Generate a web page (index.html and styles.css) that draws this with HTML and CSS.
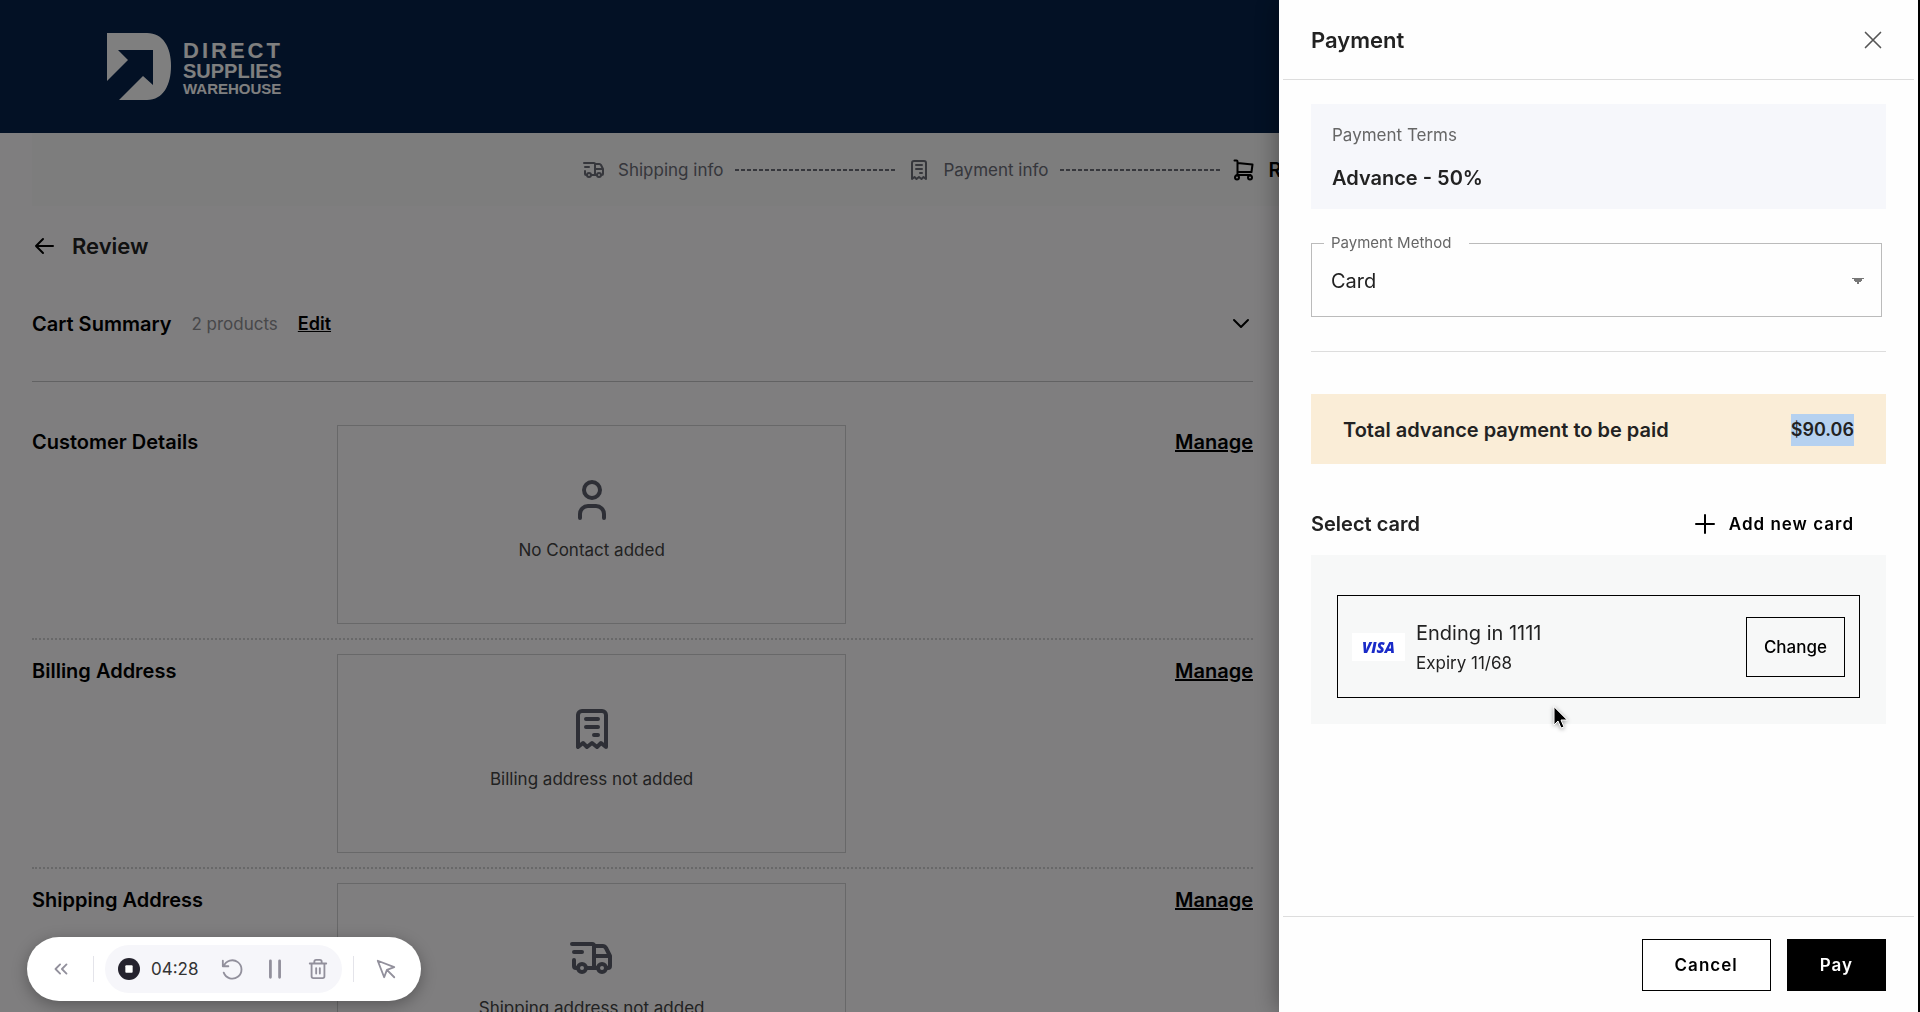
FILE: index.html
```
<!DOCTYPE html>
<html lang="en">
<head>
  <meta charset="UTF-8">
  <title>Review - Direct Supplies Warehouse</title>
  <link rel="stylesheet" href="styles.css">
</head>
<body>
  <!-- shared icons -->
  <svg class="sprite" width="0" height="0" aria-hidden="true">
    <symbol id="icon-user" viewBox="0 0 48 48">
      <circle cx="24" cy="14" r="8"/>
      <path d="M12 42v-4a8 8 0 0 1 8-8h8a8 8 0 0 1 8 8v4"/>
    </symbol>
    <symbol id="icon-receipt" viewBox="0 0 48 48">
      <path d="M10 42V10a4 4 0 0 1 4-4h20a4 4 0 0 1 4 4v32l-5-4-4 4-5-4-5 4-4-4z"/>
      <path d="M18 14h12M18 22h12M26 30h4"/>
    </symbol>
    <symbol id="icon-truck" viewBox="0 0 48 48">
      <path d="M4 10h20a2 2 0 0 1 2 2v22M26 12h8a4 4 0 0 1 4 2l4 8v10a2 2 0 0 1-2 2h-1M26 22h16M6 18h8M6 26v6a2 2 0 0 0 2 2h1M18 34h12"/>
      <circle cx="14" cy="34" r="4"/>
      <circle cx="34" cy="34" r="4"/>
    </symbol>
    <symbol id="icon-cart" viewBox="0 0 48 48">
      <path d="M5 5h4a2 2 0 0 1 2 2v27M11 10l30 3-2 15H11M9 34h28"/>
      <circle cx="10" cy="39" r="4"/>
      <circle cx="36" cy="39" r="4"/>
    </symbol>
  </svg>

  <div class="page">
    <header class="navbar">
      <a class="logo" href="#">
        <svg class="logo-mark" viewBox="0 0 64 67" aria-hidden="true">
          <path fill="#fff" d="M0 0h40c16 0 24 14 24 33S56 67 40 67H12l24-24 10 9V17H11l10 10L0 48z"/>
        </svg>
        <span class="logo-text">
          <span class="logo-direct">DIRECT</span>
          <span class="logo-supplies">SUPPLIES</span>
          <span class="logo-warehouse">WAREHOUSE</span>
        </span>
      </a>
    </header>

    <ol class="steps">
      <li class="step"><svg class="icon"><use href="#icon-truck"/></svg>Shipping info</li>
      <li class="step-line"></li>
      <li class="step"><svg class="icon"><use href="#icon-receipt"/></svg>Payment info</li>
      <li class="step-line"></li>
      <li class="step step-active"><svg class="icon"><use href="#icon-cart"/></svg>Review</li>
    </ol>

    <main class="checkout">
      <div class="title-row">
        <button class="icon-btn" aria-label="Back">
          <svg class="icon" viewBox="0 0 24 24"><path d="M21 12H4M11 5l-7 7 7 7"/></svg>
        </button>
        <h1>Review</h1>
      </div>

      <section class="cart-summary">
        <h2>Cart Summary</h2>
        <span class="cart-count">2 products</span>
        <a class="edit" href="#">Edit</a>
        <button class="icon-btn toggle" aria-label="Show products">
          <svg class="icon" viewBox="0 0 24 24"><path d="M5 8l7 7 7-7"/></svg>
        </button>
      </section>

      <section class="entry">
        <h2>Customer Details</h2>
        <div class="empty-box">
          <svg class="icon-lg"><use href="#icon-user"/></svg>
          <p>No Contact added</p>
        </div>
        <a class="manage" href="#">Manage</a>
      </section>
      <section class="entry">
        <h2>Billing Address</h2>
        <div class="empty-box">
          <svg class="icon-lg"><use href="#icon-receipt"/></svg>
          <p>Billing address not added</p>
        </div>
        <a class="manage" href="#">Manage</a>
      </section>
      <section class="entry">
        <h2>Shipping Address</h2>
        <div class="empty-box">
          <svg class="icon-lg"><use href="#icon-truck"/></svg>
          <p>Shipping address not added</p>
        </div>
        <a class="manage" href="#">Manage</a>
      </section>
    </main>
  </div>

  <div class="overlay"></div>

  <aside class="drawer" role="dialog" aria-labelledby="drawer-title">
    <header class="drawer-header">
      <h2 id="drawer-title">Payment</h2>
      <button class="icon-btn close" aria-label="Close">
        <svg class="icon" viewBox="0 0 24 24"><path d="M3 3l18 18M21 3L3 21"/></svg>
      </button>
    </header>

    <div class="drawer-body">
      <div class="terms">
        <p class="terms-label">Payment Terms</p>
        <p class="terms-value">Advance - 50%</p>
      </div>

      <fieldset class="method">
        <legend><label for="method">Payment Method</label></legend>
        <select id="method">
          <option>Card</option>
        </select>
      </fieldset>

      <div class="total">
        <span>Total advance payment to be paid</span>
        <span class="amount">$90.06</span>
      </div>

      <div class="card-head">
        <h3>Select card</h3>
        <button class="add-card">
          <svg class="icon" viewBox="0 0 24 24"><path d="M12 3v18M3 12h18"/></svg>
          Add new card
        </button>
      </div>

      <div class="card-panel">
        <div class="card">
          <span class="visa">VISA</span>
          <div class="card-info">
            <p class="card-number">Ending in 1111</p>
            <p class="card-expiry">Expiry 11/68</p>
          </div>
          <button class="btn-change">Change</button>
        </div>
      </div>
    </div>

    <footer class="drawer-footer">
      <button class="btn">Cancel</button>
      <button class="btn btn-dark">Pay</button>
    </footer>
  </aside>

  <!-- screen recorder -->
  <div class="recorder">
    <button class="rec-btn rec-collapse" aria-label="Collapse">
      <svg class="rec-icon" viewBox="0 0 24 24"><path d="M11 7l-5 5 5 5M18 7l-5 5 5 5"/></svg>
    </button>
    <span class="rec-sep"></span>
    <div class="rec-group">
      <button class="rec-btn" aria-label="Stop">
        <svg class="rec-icon" viewBox="0 0 24 24"><circle cx="12" cy="12" r="12" fill="#25232e" stroke="none"/><rect x="8" y="8" width="8" height="8" rx="1" fill="#fff" stroke="none"/></svg>
      </button>
      <span class="rec-time">04:28</span>
      <button class="rec-btn" aria-label="Restart">
        <svg class="rec-icon" viewBox="0 0 24 24"><path d="M2 3v6h6M3 9a10 10 0 1 1 0 7"/></svg>
      </button>
      <button class="rec-btn" aria-label="Pause">
        <svg class="rec-icon" viewBox="0 0 24 24"><path stroke-width="3" d="M7 3v18M17 3v18"/></svg>
      </button>
      <button class="rec-btn" aria-label="Delete">
        <svg class="rec-icon" viewBox="0 0 24 24"><path d="M3 6h18M8 6V4a2 2 0 0 1 2-2h4a2 2 0 0 1 2 2v2M5 6v14a2 2 0 0 0 2 2h10a2 2 0 0 0 2-2V6M10 11v6M14 11v6"/></svg>
      </button>
    </div>
    <span class="rec-sep"></span>
    <button class="rec-btn" aria-label="Pointer">
      <svg class="rec-icon" viewBox="0 0 24 24"><path d="M3 3l7 18 3-8 8-3zM13 13l8 8"/></svg>
    </button>
  </div>

  <svg class="cursor" viewBox="0 0 16 24" aria-hidden="true">
    <path d="M1 1v18l4-4 3 7 3-1-3-7h6z" fill="#000" stroke="#fff" stroke-width="1"/>
  </svg>
</body>
</html>
```
FILE: styles.css
```
* { box-sizing: border-box; }
body {
  margin: 0;
  font-family: Inter, "Liberation Sans", sans-serif;
  font-size: 17px;
  line-height: 24px;
  color: #222;
  overflow: hidden;
}
h1, h2, h3, p, ol, fieldset { margin: 0; padding: 0; }
h1, h2, h3 { font-weight: 600; }
h1 { font-size: 22px; line-height: 34px; }
h2, h3 { font-size: 20px; }
a { color: inherit; }
button { font-family: inherit; font-size: 17px; color: #000; cursor: pointer; }

.sprite { position: absolute; }
svg { fill: none; stroke: currentColor; stroke-width: 2; stroke-linecap: round; stroke-linejoin: round; flex: none; }
symbol { stroke-width: 4; }
.icon { display: block; width: 24px; height: 24px; }
.icon-lg { width: 48px; height: 48px; }
.icon-btn { padding: 0; border: 0; background: none; }

/* page */
.page { height: 100vh; overflow: hidden; background: #fefdff; }
.navbar { display: flex; align-items: center; height: 133px; padding: 0 107px; background: #06224a; }
.logo { display: flex; align-items: center; gap: 12px; color: #fff; text-decoration: none; }
.logo-mark { width: 64px; height: 67px; stroke: none; }
.logo-text { display: flex; flex-direction: column; padding-top: 4px; font-family: "Liberation Sans", sans-serif; font-weight: 700; }
.logo-direct { font-size: 22px; line-height: 20px; letter-spacing: 3px; }
.logo-supplies { font-size: 20px; line-height: 20px; }
.logo-warehouse { font-size: 15px; line-height: 16px; }

.steps {
  display: flex;
  align-items: center;
  justify-content: center;
  gap: 12px;
  height: 73px;
  margin: 0 32px;
  background: #fafafb;
  list-style: none;
}
.step { display: flex; align-items: center; gap: 12px; color: #6c6e78; }
.step-active { color: #000; font-size: 20px; font-weight: 600; }
.step-line { width: 160px; height: 2px; background: repeating-linear-gradient(to right, #6c6e78 0 4px, transparent 4px 6px); }

.checkout { padding: 0 667px 0 32px; }
.title-row { display: flex; align-items: center; gap: 16px; padding-top: 23px; }
.cart-summary { display: flex; align-items: center; gap: 20px; margin-top: 15px; height: 104px; padding-bottom: 12px; border-bottom: 1px solid #c4c4c6; color: #000; }
.cart-count { color: #909094; }
.edit { font-size: 18px; font-weight: 600; }
.toggle { margin-left: auto; }

.entry { display: grid; grid-template-columns: 3fr 5fr 4fr; padding: 14px 0; border-bottom: 2px dotted #d0d0d2; color: #000; }
.cart-summary + .entry { padding-top: 43px; }
.entry h2, .manage { padding-top: 5px; }
.manage { justify-self: end; align-self: start; font-size: 20px; font-weight: 600; }
.empty-box { display: flex; flex-direction: column; align-items: center; gap: 14px; height: 199px; padding-top: 50px; border: 1px solid #d0d0d2; color: #444; }
.empty-box svg { color: #5c5f6c; }

.overlay { position: fixed; inset: 0; background: rgba(0, 0, 0, 0.5); }

/* payment drawer */
.drawer {
  position: fixed;
  top: 0;
  right: 0;
  bottom: 0;
  display: flex;
  flex-direction: column;
  width: 641px;
  max-width: 100%;
  padding: 0 4px;
  border-right: 2px solid #000;
  background: #fefefe;
  box-shadow: 0 0 24px rgba(0, 0, 0, 0.4);
}
.drawer-header { display: flex; align-items: center; justify-content: space-between; height: 80px; padding: 0 28px; border-bottom: 1px solid #ddd; }
.drawer-header h2 { font-size: 22px; line-height: 32px; }
.close { color: #555; }
.close .icon { margin-right: 3px; width: 20px; height: 20px; }
.drawer-body { flex: 1; padding: 24px 28px; }

.terms { padding: 19px 21px; background: #f6f7fb; }
.terms-label { color: #666; }
.terms-value { margin-top: 19px; font-size: 20px; font-weight: 600; }

.method { height: 84px; margin: 24px 4px 0 0; border: 1px solid #bbb; }
.method legend { margin-left: 12px; padding: 0 18px 0 7px; font-size: 15px; line-height: 20px; color: #666; }
.method select {
  appearance: none;
  width: 100%;
  height: 56px;
  padding: 0 19px;
  border: 0;
  font: inherit;
  font-size: 20px;
  color: #222;
  background: linear-gradient(to bottom right, #777 50%, transparent 50%) right 17px center / 6px 6px no-repeat,
    linear-gradient(to bottom left, #777 50%, transparent 50%) right 23px center / 6px 6px no-repeat;
}

.total { position: relative; display: flex; align-items: center; justify-content: space-between; height: 70px; margin-top: 77px; padding: 2px 32px 0; background: #faedd7; font-size: 20px; font-weight: 600; }
.total::before { content: ""; position: absolute; top: -43px; left: 0; right: 0; border-top: 1px solid #ddd; }
.amount { font-size: 18px; line-height: 32px; background: #b5d1f0; }

.card-head { display: flex; align-items: center; justify-content: space-between; margin-top: 44px; padding-right: 32px; }
.add-card { display: flex; align-items: center; gap: 12px; padding: 0; border: 0; background: none; font-weight: 600; line-height: 32px; letter-spacing: 1px; }
.card-panel { margin-top: 15px; padding: 40px 26px 26px; background: #f7f8f8; }
.card { display: flex; align-items: center; height: 103px; padding: 0 14px; border: 1px solid #000; }
.visa { width: 53px; margin-right: 11px; background: #fff; font-family: "Open Sans", sans-serif; font-size: 15px; font-weight: 800; font-style: italic; line-height: 28px; text-align: center; color: #1a2bc8; }
.card-info { flex: 1; }
.card-number { font-size: 20px; line-height: 32px; }
.card-expiry { line-height: 28px; }
.btn-change { height: 60px; padding: 0 17px; border: 1px solid #000; background: none; font-weight: 500; }

.drawer-footer { display: flex; align-items: center; justify-content: flex-end; gap: 16px; height: 96px; padding: 0 28px; border-top: 1px solid #ddd; }
.btn { height: 52px; padding: 0 32px; border: 1px solid #000; background: #fff; font-weight: 600; letter-spacing: 1px; }
.btn-dark { background: #000; color: #fff; }

/* recorder */
.recorder {
  position: fixed;
  left: 27px;
  bottom: 11px;
  display: flex;
  align-items: center;
  gap: 11px;
  height: 64px;
  padding: 0 24px 0 23px;
  border-radius: 32px;
  background: #fff;
  box-shadow: 0 4px 16px rgba(0, 0, 0, 0.3);
}
.rec-btn { padding: 0; border: 0; background: none; color: #92909c; }
.rec-collapse, .recorder > .rec-btn:last-child { margin: 0 10px 0 0; }
.recorder > .rec-btn:last-child { margin: 0 0 0 10px; }
.rec-icon { display: block; width: 22px; height: 22px; }
.rec-sep { width: 1px; height: 26px; background: #e4e4ea; }
.rec-group { display: flex; align-items: center; gap: 21px; height: 48px; padding: 0 13px; border-radius: 24px; background: #f6f6fa; }
.rec-time { margin: 0 1px 0 -10px; color: #333; }

.cursor { position: fixed; left: 1553px; top: 706px; width: 16px; height: 24px; filter: drop-shadow(0 1px 2px rgba(0, 0, 0, 0.4)); }
```
